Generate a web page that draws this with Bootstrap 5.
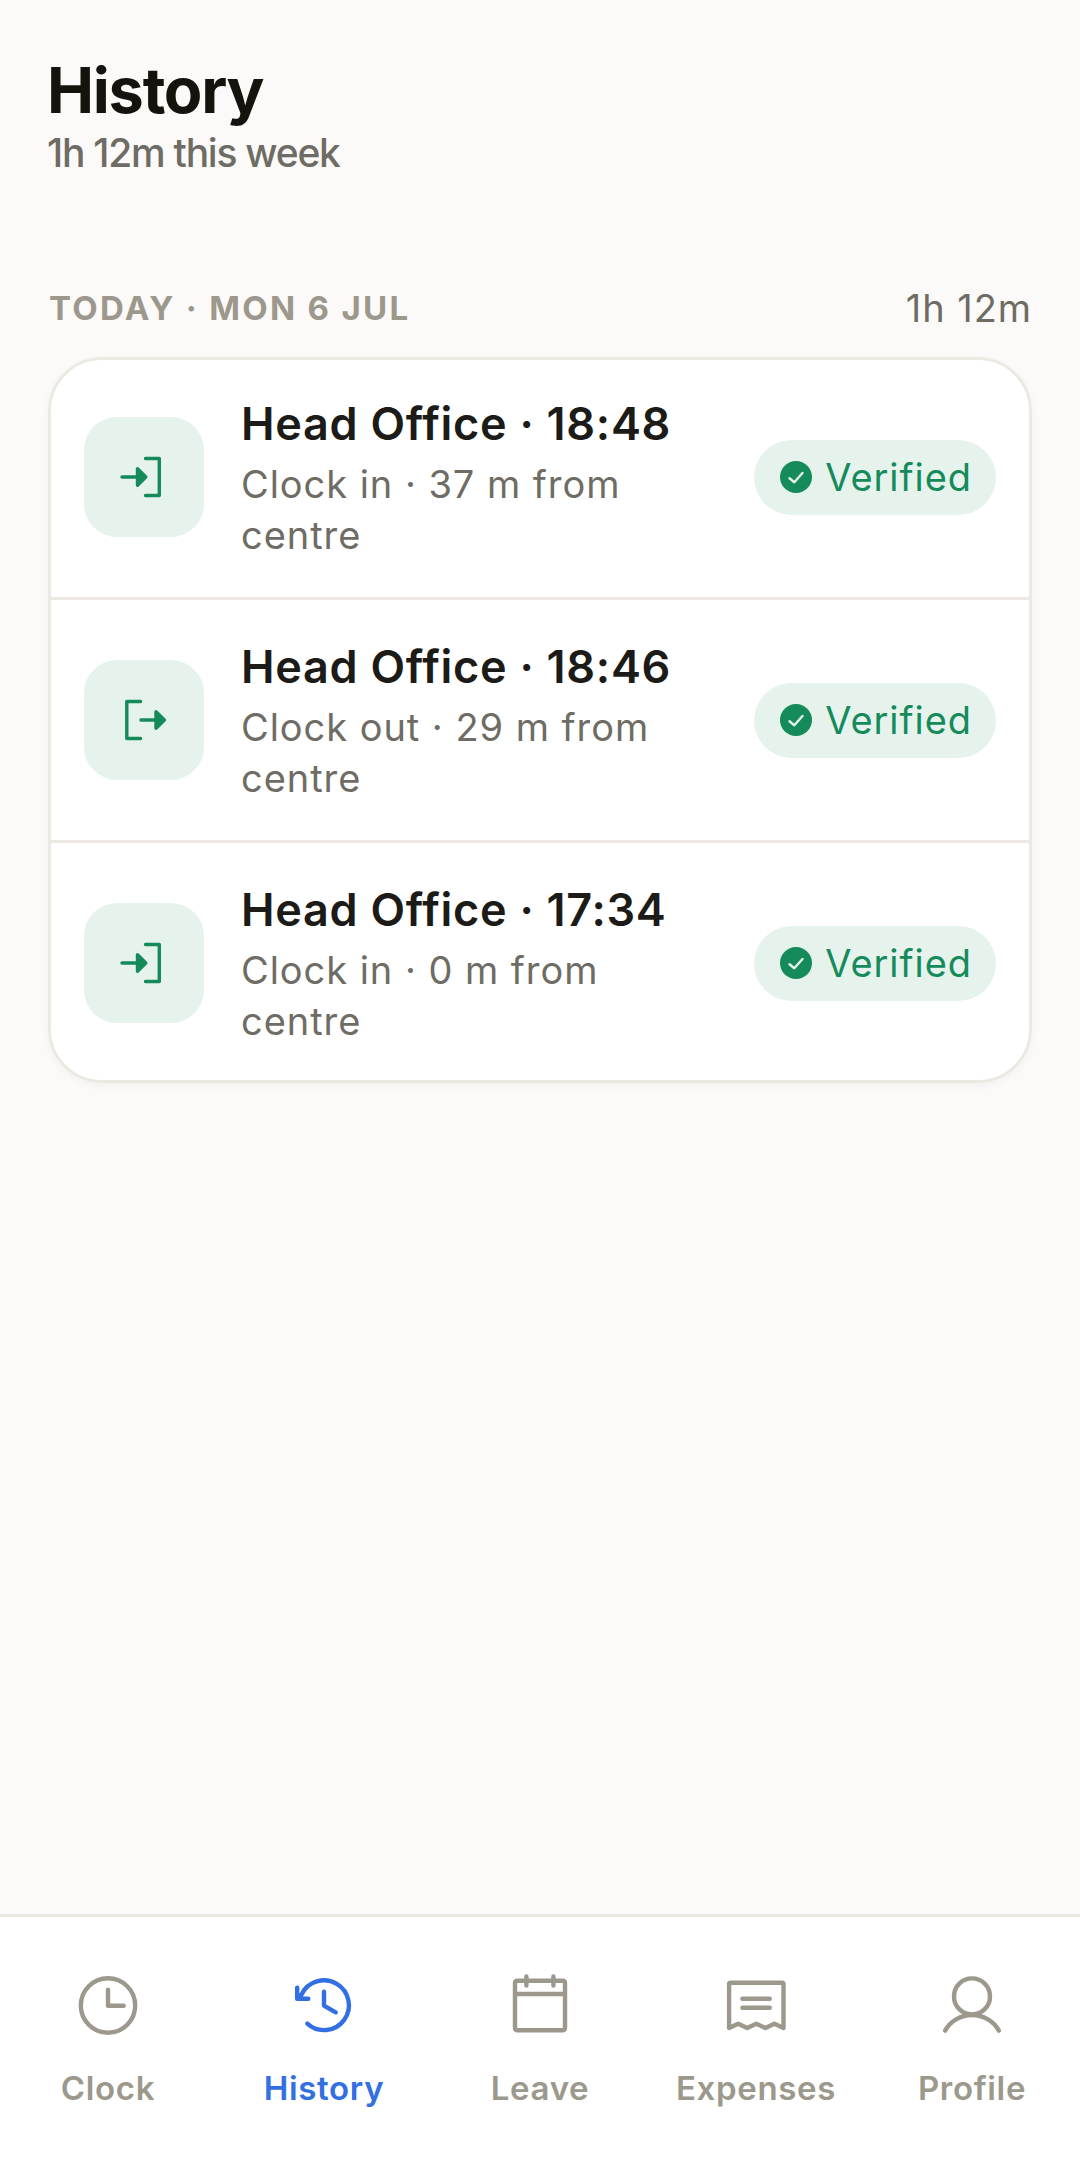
<!DOCTYPE html>
<html lang="en">
<head>
<meta charset="utf-8">
<meta name="viewport" content="width=device-width, initial-scale=1">
<title>History</title>
<link href="https://cdn.jsdelivr.net/npm/bootstrap@5.3.0/dist/css/bootstrap.min.css" rel="stylesheet">
<style>
  :root { --page: #fbfaf8; --line: #ebe9e2; --ink: #1c1b18; --muted: #6e6c64; --soft: #9c988c; --green: #158a5a; --mint: #e6f3ed; --blue: #326fe2; }
  body { background: var(--page); color: var(--ink); font-family: Inter, "Liberation Sans", sans-serif; font-size: 38px; line-height: 51px; }
  .screen-head { padding: 53px 47px 0; }
  .screen-title { font-size: 63px; line-height: 74px; font-weight: 700; letter-spacing: -0.02em; color: #14130d; }
  .screen-sub { font-size: 39px; font-weight: 500; letter-spacing: -0.032em; color: var(--muted); }
  .day-log { padding: 105px 48px 0; }
  .day-head { margin-bottom: 23px; padding-left: 1px; }
  .day-name { font-size: 33px; font-weight: 700; letter-spacing: 0.07em; color: var(--soft); }
  .entry-meta, .day-total { color: var(--muted); }
  .entry-list { background: #fff; border-radius: 54px; outline: 3px solid var(--line); outline-offset: -3px; box-shadow: 0 3px 9px rgba(40, 36, 20, .04); }
  .entry { min-height: 240px; padding: 36px; gap: 37px; }
  .entry + .entry { border-top: 3px solid var(--line); min-height: 243px; }
  .entry-icon { width: 120px; height: 120px; border-radius: 33px; background: var(--mint); color: var(--green); }
  .entry-title { font-size: 45px; line-height: 62px; font-weight: 600; letter-spacing: 0.016em; margin-bottom: 4px; }
  .entry-meta, .day-total, .status-chip { letter-spacing: 0.025em; }
  .status-chip { height: 75px; padding: 0 24px; gap: 11px; background: var(--mint); color: var(--green); }
  .tab-bar { background: #fff; border-top: 3px solid var(--line); padding: 53px 0 67px; }
  .tab-link { flex: 1 1 0; gap: 25px; font-size: 33px; line-height: 42px; font-weight: 600; letter-spacing: 0.02em; color: var(--soft); }
  .tab-link.active { color: var(--blue); }
  .tab-link svg { fill: none; stroke: currentColor; stroke-width: 4.4; stroke-linecap: round; stroke-linejoin: round; }
  .entry-icon svg { stroke: currentColor; stroke-width: 3.4; stroke-linecap: round; stroke-linejoin: round; fill: none; }
</style>
</head>
<body>
<svg class="d-none" aria-hidden="true">
  <symbol id="enter" viewBox="0 0 48 48"><path d="M25.5 5.5H39.3V42.5H25.5M2 24H18"/><path d="M17.5 15.7V32.3L25.8 24Z" fill="currentColor"/></symbol>
  <symbol id="leave" viewBox="0 0 48 48"><path d="M20.6 5.5H6.8V42.5H20.6M21 24H36"/><path d="M36 15.7V32.3L44.4 24Z" fill="currentColor"/></symbol>
  <symbol id="verified" viewBox="0 0 36 36"><circle cx="18" cy="18" r="16" fill="currentColor"/><path d="M11.5 19.3L16.3 23.2L24.5 14" fill="none" stroke="#e6f3ed" stroke-width="2.4" stroke-linecap="round" stroke-linejoin="round"/></symbol>
</svg>
<div class="d-flex flex-column min-vh-100">
  <header class="screen-head">
    <h1 class="screen-title mb-0">History</h1>
    <p class="screen-sub mb-0">1h 12m this week</p>
  </header>
  <main class="day-log flex-grow-1">
    <div class="day-head d-flex justify-content-between align-items-center">
      <h2 class="day-name text-uppercase mb-0">Today · Mon 6 Jul</h2>
      <span class="day-total">1h 12m</span>
    </div>
    <ul class="entry-list list-unstyled mb-0">
      <li class="entry d-flex align-items-center">
        <span class="entry-icon d-flex align-items-center justify-content-center flex-shrink-0"><svg width="48" height="48"><use href="#enter"/></svg></span>
        <div class="flex-grow-1">
          <h3 class="entry-title">Head Office · 18:48</h3>
          <p class="entry-meta mb-0">Clock in · 37 m from centre</p>
        </div>
        <span class="status-chip rounded-pill d-flex align-items-center flex-shrink-0"><svg width="36" height="36"><use href="#verified"/></svg>Verified</span>
      </li>
      <li class="entry d-flex align-items-center">
        <span class="entry-icon d-flex align-items-center justify-content-center flex-shrink-0"><svg width="48" height="48"><use href="#leave"/></svg></span>
        <div class="flex-grow-1">
          <h3 class="entry-title">Head Office · 18:46</h3>
          <p class="entry-meta mb-0">Clock out · 29 m from centre</p>
        </div>
        <span class="status-chip rounded-pill d-flex align-items-center flex-shrink-0"><svg width="36" height="36"><use href="#verified"/></svg>Verified</span>
      </li>
      <li class="entry d-flex align-items-center">
        <span class="entry-icon d-flex align-items-center justify-content-center flex-shrink-0"><svg width="48" height="48"><use href="#enter"/></svg></span>
        <div class="flex-grow-1">
          <h3 class="entry-title">Head Office · 17:34</h3>
          <p class="entry-meta mb-0">Clock in · 0 m from centre</p>
        </div>
        <span class="status-chip rounded-pill d-flex align-items-center flex-shrink-0"><svg width="36" height="36"><use href="#verified"/></svg>Verified</span>
      </li>
    </ul>
  </main>
  <nav class="tab-bar d-flex" aria-label="Main">
    <a class="tab-link d-flex flex-column align-items-center text-decoration-none" href="#clock">
      <svg width="72" height="72" viewBox="0 0 72 72"><circle cx="36" cy="35.5" r="27.2"/><path d="M36 19.8V35.7H51.7"/></svg>Clock</a>
    <a class="tab-link active d-flex flex-column align-items-center text-decoration-none" href="#history" aria-current="page">
      <svg width="72" height="72" viewBox="0 0 72 72"><path d="M19.3 53.7A24.9 24.9 0 1 0 13.5 24.6L9.2 28.7M9.2 17.6V28.7H20.3M36 21.8V35.6L47.7 42.3"/></svg>History</a>
    <a class="tab-link d-flex flex-column align-items-center text-decoration-none" href="#leave-days">
      <svg width="72" height="72" viewBox="0 0 72 72"><rect x="11" y="10.8" width="50" height="49.4" rx="2"/><path d="M11 24H61M22.4 6.4V15.6M49.4 6.4V15.6"/></svg>Leave</a>
    <a class="tab-link d-flex flex-column align-items-center text-decoration-none" href="#expenses">
      <svg width="72" height="72" viewBox="0 0 72 72"><path d="M9.1 58V14.3Q9.1 12.8 10.6 12.8H62Q63.5 12.8 63.5 14.3V58L54.4 53.7L45.4 58L36.3 53.7L27.2 58L18.2 53.7ZM22.4 28.8H49.8M22.4 37.8H49.8"/></svg>Expenses</a>
    <a class="tab-link d-flex flex-column align-items-center text-decoration-none" href="#profile">
      <svg width="72" height="72" viewBox="0 0 72 72"><circle cx="36" cy="26.4" r="18"/><path d="M9.1 60.6A31 31 0 0 1 62.9 60.6"/></svg>Profile</a>
  </nav>
</div>
<script src="https://cdn.jsdelivr.net/npm/bootstrap@5.3.0/dist/js/bootstrap.bundle.min.js"></script>
</body>
</html>
